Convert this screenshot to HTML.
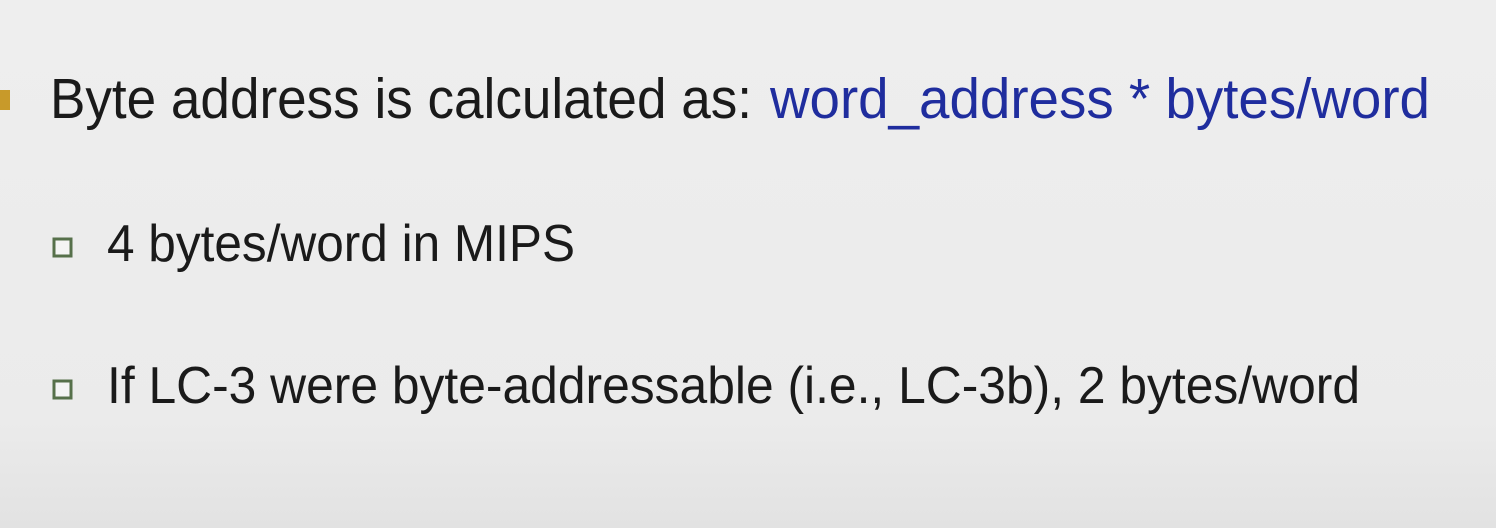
<!DOCTYPE html>
<html><head><meta charset="utf-8"><style>
html,body{margin:0;padding:0;width:1496px;height:528px;overflow:hidden;background:#ededed}
svg{display:block}
</style></head><body>
<svg width="1496" height="528" viewBox="0 0 1496 528" xmlns="http://www.w3.org/2000/svg">
<defs><linearGradient id="g" x1="0" y1="0" x2="0" y2="1">
<stop offset="0" stop-color="#eeeeee"/><stop offset="0.8" stop-color="#ebebeb"/><stop offset="1" stop-color="#e2e2e2"/></linearGradient></defs>
<rect width="1496" height="528" fill="url(#g)"/>
<rect x="0" y="90" width="10" height="20" fill="#c89a2a"/>
<rect x="54" y="239" width="17" height="17" fill="#f4f4f4" stroke="#56704a" stroke-width="3"/>
<rect x="54" y="381" width="17" height="17" fill="#f4f4f4" stroke="#56704a" stroke-width="3"/>
<g font-family="Liberation Sans, DejaVu Sans, sans-serif">
<text x="50" y="118" font-size="57" fill="#1a1a1a" textLength="702" lengthAdjust="spacingAndGlyphs">Byte address is calculated as:</text>
<text x="770" y="118" font-size="57" fill="#1f2d9e" textLength="660" lengthAdjust="spacingAndGlyphs">word_address * bytes/word</text>
<text x="107" y="261" font-size="52" fill="#1a1a1a" textLength="468" lengthAdjust="spacingAndGlyphs">4 bytes/word in MIPS</text>
<text x="107" y="403" font-size="52" fill="#1a1a1a" textLength="1253" lengthAdjust="spacingAndGlyphs">If LC-3 were byte-addressable (i.e., LC-3b), 2 bytes/word</text>
</g>
</svg>
</body></html>
